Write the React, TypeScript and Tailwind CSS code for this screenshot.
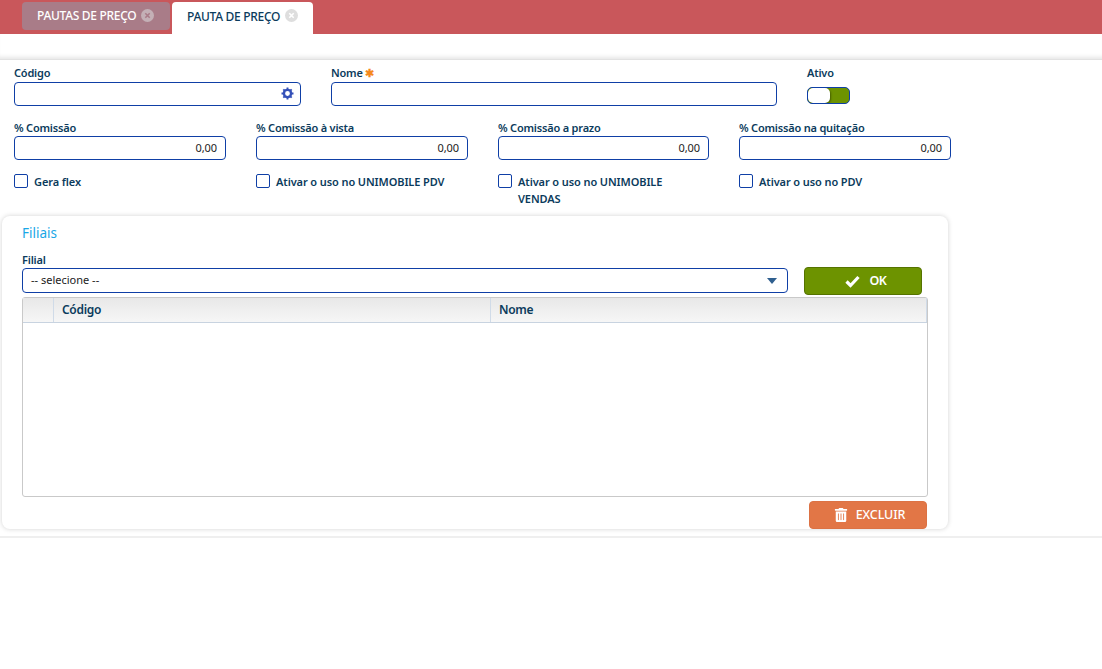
import React from 'react';
import { FaTrashAlt } from 'react-icons/fa';

const font = { fontFamily: '"Noto Sans", sans-serif' };

const Label: React.FC<{ children: React.ReactNode }> = ({ children }) => (
  <div className="h-[14px] text-[11px] leading-[14px] font-semibold tracking-[-0.2px] text-[#0b3b5c] whitespace-nowrap">{children}</div>
);

const Field: React.FC<{ label: string; width: string }> = ({ label, width }) => (
  <div className={width}>
    <Label>{label}</Label>
    <div className="mt-[1px] h-[24px] rounded-[4px] border border-[#0f3fa6] bg-white flex items-center justify-end pr-[8px] text-[11px] tracking-[-0.1px] text-[#222]">
      0,00
    </div>
  </div>
);

const Check: React.FC<{ label: React.ReactNode; width: string }> = ({ label, width }) => (
  <div className={`${width} flex items-start gap-[6px]`}>
    <span className="w-[14px] h-[14px] shrink-0 rounded-[2px] border border-[#0f3fa6] bg-white" />
    <span className="-mt-[1px] text-[11px] leading-[17px] font-semibold tracking-[-0.1px] text-[#0b3b5c]">{label}</span>
  </div>
);

const CloseDot: React.FC<{ bg: string; fg: string }> = ({ bg, fg }) => (
  <svg width="13" height="13" viewBox="0 0 13 13" className="-mt-[2px]">
    <circle cx="6.5" cy="6.5" r="6.5" fill={bg} />
    <path d="M4.3 4.3l4.4 4.4M8.7 4.3l-4.4 4.4" stroke={fg} strokeWidth="1.6" />
  </svg>
);

const Gear = () => (
  <svg width="13" height="13" viewBox="0 0 13 13" fill="none" stroke="#3451b8">
    <circle cx="6.5" cy="6.5" r="3.6" strokeWidth="2.4" />
    <path
      d="M6.5 0.5v2M6.5 10.5v2M0.5 6.5h2M10.5 6.5h2M2.3 2.3l1.4 1.4M9.3 9.3l1.4 1.4M10.7 2.3L9.3 3.7M3.7 9.3l-1.4 1.4"
      strokeWidth="1.9"
    />
  </svg>
);

export default function App() {
  return (
    <div className="w-[1102px] h-[669px] bg-white overflow-hidden" style={font}>
      {/* Tabs */}
      <div className="h-[34px] bg-[#c9575b] flex items-end pl-[22px] gap-[2px]">
        <div className="mb-[4px] h-[28px] w-[148px] rounded-[4px] bg-[#a97c88] flex items-center pl-[15px] gap-[5px] text-[12px] font-medium tracking-[-0.3px] text-white">
          PAUTAS DE PREÇO
          <CloseDot bg="#c4b0b6" fg="#a97c88" />
        </div>
        <div className="h-[32px] w-[141px] rounded-t-[4px] bg-white flex items-center pl-[15px] gap-[5px] text-[12px] font-medium tracking-[-0.3px] text-[#0b3b5c] pb-[3px]">
          PAUTA DE PREÇO
          <CloseDot bg="#dedede" fg="#ffffff" />
        </div>
      </div>

      {/* Toolbar strip */}
      <div className="h-[26px] border-b border-[#e2e2e2] shadow-[inset_0_-5px_4px_-3px_rgba(0,0,0,0.1)]" />

      {/* Form */}
      <div className="pl-[14px] pt-[6px]">
        <div className="flex">
          <div className="w-[287px]">
            <Label>Código</Label>
            <div className="mt-[2px] h-[24px] rounded-[4px] border border-[#0f3fa6] flex items-center justify-end pr-[6px] pb-[2px]">
              <Gear />
            </div>
          </div>
          <div className="ml-[30px] w-[446px]">
            <Label>
              Nome <span className="text-[#f58a1f]">✱</span>
            </Label>
            <div className="mt-[2px] h-[24px] rounded-[4px] border border-[#0f3fa6]" />
          </div>
          <div className="ml-[30px]">
            <Label>Ativo</Label>
            <div className="mt-[7px] w-[43px] h-[17px] rounded-[5px] border border-[#0f3fa6] bg-[#6d9300] overflow-hidden">
              <div className="w-[22px] h-full rounded-[5px] bg-white shadow-[1px_1px_2px_rgba(0,0,0,0.35)]" />
            </div>
          </div>
        </div>

        <div className="mt-[15px] flex gap-[30px]">
          <Field label="% Comissão" width="w-[212px]" />
          <Field label="% Comissão à vista" width="w-[212px]" />
          <Field label="% Comissão a prazo" width="w-[211px]" />
          <Field label="% Comissão na quitação" width="w-[212px]" />
        </div>

        <div className="mt-[14px] flex gap-[30px] h-[42px]">
          <Check label="Gera flex" width="w-[212px]" />
          <Check label="Ativar o uso no UNIMOBILE PDV" width="w-[212px]" />
          <Check label={<>Ativar o uso no UNIMOBILE<br />VENDAS</>} width="w-[211px]" />
          <Check label="Ativar o uso no PDV" width="w-[212px]" />
        </div>
      </div>

      {/* Filiais panel */}
      <div className="ml-[2px] w-[946px] h-[313px] rounded-[8px] bg-white shadow-[0_0_5px_rgba(0,0,0,0.18)] pl-[20px] pr-[20px] pt-[8px]">
        <div className="text-[13.5px] leading-[18px] text-[#1aa7e6]">Filiais</div>
        <div className="mt-[11px]">
          <Label>Filial</Label>
        </div>
        <div className="flex items-center">
          <div className="mb-[1px] w-[766px] h-[25px] rounded-[4px] border border-[#0f3fa6] flex items-center justify-between pl-[8px] pr-[10px] text-[11px] text-[#222]">
            -- selecione --
            <span className="w-0 h-0 border-x-[5px] border-x-transparent border-t-[6px] border-t-[#2f5f8f]" />
          </div>
          <button className="ml-[16px] w-[118px] h-[28px] rounded-[4px] bg-[#6d9300] border border-[#557300] flex items-center justify-center gap-[9px] pl-[6px] text-[12.5px] font-semibold tracking-[-0.4px] text-white">
            <svg width="15" height="13" viewBox="0 0 15 13" fill="none" stroke="#fff" strokeWidth="3.2">
              <path d="M1.5 6.5l4 4 8-8.5" />
            </svg>
            OK
          </button>
        </div>

        <div className="mt-[2px] w-[906px] h-[200px] rounded-[3px] border border-[#c9c9c9]">
          <div className="flex h-[25px] border-b border-[#c8d3e0] bg-gradient-to-b from-[#e8e8e8] to-[#f6f6f6] text-[12px] font-semibold tracking-[-0.3px] text-[#0b3b5c]">
            <div className="w-[31px] border-r border-[#d0dbe8]" />
            <div className="w-[437px] border-r border-[#d0dbe8] pl-[8px] flex items-center">Código</div>
            <div className="flex-1 border-r border-[#d0dbe8] pl-[8px] flex items-center">Nome</div>
          </div>
        </div>

        <div className="mt-[4px] flex justify-end">
          <button className="mr-[1px] w-[118px] h-[28px] rounded-[4px] bg-[#e27646] border border-[#dc7244] flex items-center justify-center gap-[8px] pl-[3px] text-[12.5px] font-medium tracking-[-0.1px] text-white">
            <FaTrashAlt className="text-[14px]" />
            EXCLUIR
          </button>
        </div>
      </div>

      <div className="mt-[7px] h-[2px] bg-[#efefef]" />
    </div>
  );
}
